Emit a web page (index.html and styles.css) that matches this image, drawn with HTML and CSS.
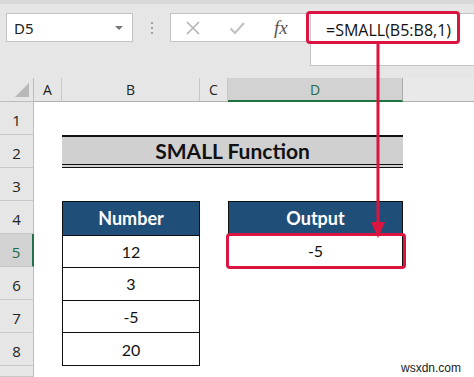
FILE: index.html
```html
<!DOCTYPE html>
<html lang="en">

<head>
  <meta charset="UTF-8">
  <title>SMALL Function</title>
  <link rel="stylesheet" href="styles.css">
</head>

<body>

  <div class="toolbar">
    <div class="name-box">
      <span>D5</span>
      <span class="caret"></span>
    </div>
    <div class="grip"><i></i><i></i><i></i></div>
    <div class="buttons">
      <svg class="icon" width="16" height="16" viewBox="0 0 16 16">
        <path d="M2 2 L14 14 M14 2 L2 14" stroke="#b4b4b4" stroke-width="1.6" fill="none" />
      </svg>
      <svg class="icon" width="16" height="16" viewBox="0 0 16 16">
        <path d="M1.5 8.5 L6 13 L15 3" stroke="#c2c2c2" stroke-width="2.2" fill="none" />
      </svg>
      <span class="fx">fx</span>
    </div>
    <div class="formula">=SMALL(B5:B8,1)</div>
  </div>

  <div class="sheet">
    <div class="corner"><span class="tri"></span></div>
    <div class="col-head">A</div>
    <div class="col-head">B</div>
    <div class="col-head">C</div>
    <div class="col-head active">D</div>
    <div class="col-head rest"></div>

    <div class="row-head r1">1</div>
    <div class="row-head r2">2</div>
    <div class="row-head r3">3</div>
    <div class="row-head r4">4</div>
    <div class="row-head r5 active">5</div>
    <div class="row-head r6">6</div>
    <div class="row-head r7">7</div>
    <div class="row-head r8">8</div>
    <div class="row-head r9"></div>

    <div class="title">SMALL Function</div>

    <div class="num-table">
      <div class="th">Number</div>
      <div class="td">12</div>
      <div class="td">3</div>
      <div class="td">-5</div>
      <div class="td">20</div>
    </div>

    <div class="out-table">
      <div class="th">Output</div>
      <div class="td">-5</div>
    </div>
  </div>

  <!-- annotation overlay -->
  <div class="mark-formula"></div>
  <div class="mark-cell"></div>
  <svg class="arrow" width="20" height="200" viewBox="0 0 20 200">
    <rect x="8.5" y="0" width="3" height="182" fill="#dc1440" />
    <path d="M3 178 L17 178 L10 194 Z" fill="#dc1440" />
  </svg>

  <div class="watermark">wsxdn.com</div>

</body>

</html>
```

FILE: styles.css
```css
body {
  margin: 0;
  width: 474px;
  height: 377px;
  overflow: hidden;
  position: relative;
  background: #fff;
  font-family: Lato, 'Noto Sans', sans-serif;
}

.toolbar {
  height: 78px;
  box-sizing: border-box;
  background: #e6e6e6;
  border-top: 4px solid #d8d8d8;
  padding-top: 9px;
  padding-left: 6px;
  display: flex;
  align-items: flex-start;
}

.name-box {
  width: 127px;
  height: 29px;
  box-sizing: border-box;
  background: #fff;
  border: 1px solid #c3c3c3;
  display: flex;
  align-items: center;
  justify-content: space-between;
  padding: 0 9px 0 7px;
  font-family: 'Noto Sans', sans-serif;
  font-size: 15px;
  color: #222;
}

.caret {
  width: 0;
  height: 0;
  border-left: 4px solid transparent;
  border-right: 4px solid transparent;
  border-top: 4px solid #777;
}

.grip {
  width: 37px;
  height: 29px;
  display: flex;
  flex-direction: column;
  align-items: center;
  justify-content: center;
  gap: 3px;
}

.grip i {
  width: 2px;
  height: 2px;
  background: #a0a0a0;
}

.buttons {
  width: 140px;
  height: 29px;
  box-sizing: border-box;
  background: #fff;
  border: 1px solid #c3c3c3;
  border-right: none;
  display: flex;
  align-items: center;
  padding-left: 14px;
  gap: 28px;
}

.fx {
  font-family: 'Liberation Serif', serif;
  font-style: italic;
  font-size: 19px;
  color: #555;
  margin-left: 1px;
}

.formula {
  flex: 1;
  height: 53px;
  box-sizing: border-box;
  background: #fff;
  border: 1px solid #c3c3c3;
  border-right: none;
  padding: 5px 0 0 15px;
  font-family: 'Open Sans', sans-serif;
  font-size: 16px;
  color: #111;
}

.sheet {
  display: grid;
  grid-template-columns: 34px 28px 138px 28px 175px 1fr;
  grid-template-rows: 24px repeat(8, 33px) 11px;
  font-size: 15px;
  color: #111;
}

.corner {
  background: #e6e6e6;
  border-right: 1px solid #bdbdbd;
  border-bottom: 1px solid #bdbdbd;
  position: relative;
}

.tri {
  position: absolute;
  right: 4px;
  bottom: 4px;
  width: 0;
  height: 0;
  border-left: 14px solid transparent;
  border-bottom: 14px solid #b8b8b8;
}

.col-head {
  background: #e6e6e6;
  border-right: 1px solid #c8c8c8;
  border-bottom: 1px solid #b0b0b0;
  display: flex;
  align-items: center;
  justify-content: center;
  font-family: 'Open Sans', sans-serif;
  font-size: 14px;
  color: #222;
}

.col-head.active {
  background: #d2d2d2;
  color: #1e6b45;
  border-bottom: 2px solid #217346;
  border-right-color: #ababab;
}

.col-head.rest {
  background: #e9e9e9;
  border-right: none;
}

.row-head {
  grid-column: 1;
  background: #e6e6e6;
  border-right: 1px solid #bdbdbd;
  border-bottom: 1px solid #c8c8c8;
  display: flex;
  align-items: center;
  justify-content: center;
  font-family: 'Open Sans', sans-serif;
  font-size: 15px;
  color: #222;
  padding-top: 3px;
}

.row-head.active {
  background: #d2d2d2;
  color: #1e6b45;
  border-right: 2px solid #217346;
}

.r1 { grid-row: 2; }
.r2 { grid-row: 3; }
.r3 { grid-row: 4; }
.r4 { grid-row: 5; }
.r5 { grid-row: 6; }
.r6 { grid-row: 7; }
.r7 { grid-row: 8; }
.r8 { grid-row: 9; }
.r9 { grid-row: 10; }

.title {
  grid-column: 3 / 6;
  grid-row: 3;
  background: #d0d0d0;
  border-top: 2px solid #111;
  border-bottom: 4px double #111;
  display: flex;
  align-items: center;
  justify-content: center;
  font-weight: bold;
  font-size: 21px;
  color: #111;
}

.num-table {
  grid-column: 3;
  grid-row: 5 / 10;
  display: grid;
  grid-template-rows: repeat(5, 1fr);
  border: 1px solid #111;
}

.out-table {
  grid-column: 5;
  grid-row: 5 / 7;
  display: grid;
  grid-template-rows: repeat(2, 1fr);
  border: 1px solid #111;
}

.th {
  background: #1f4e79;
  color: #fff;
  font-weight: bold;
  font-size: 18px;
  display: flex;
  align-items: center;
  justify-content: center;
}

.td {
  border-top: 1px solid #111;
  display: flex;
  align-items: center;
  justify-content: center;
  font-size: 16px;
}

.mark-formula {
  position: absolute;
  left: 306px;
  top: 11px;
  width: 154px;
  height: 33px;
  box-sizing: border-box;
  border: 3px solid #dc1440;
  border-radius: 4px;
}

.mark-cell {
  position: absolute;
  left: 226px;
  top: 233px;
  width: 180px;
  height: 36px;
  box-sizing: border-box;
  border: 3px solid #dc1440;
  border-radius: 4px;
}

.arrow {
  position: absolute;
  left: 368px;
  top: 44px;
}

.watermark {
  position: absolute;
  left: 401px;
  top: 361px;
  font-family: 'Liberation Sans', sans-serif;
  font-size: 12px;
  color: #222;
}
```
